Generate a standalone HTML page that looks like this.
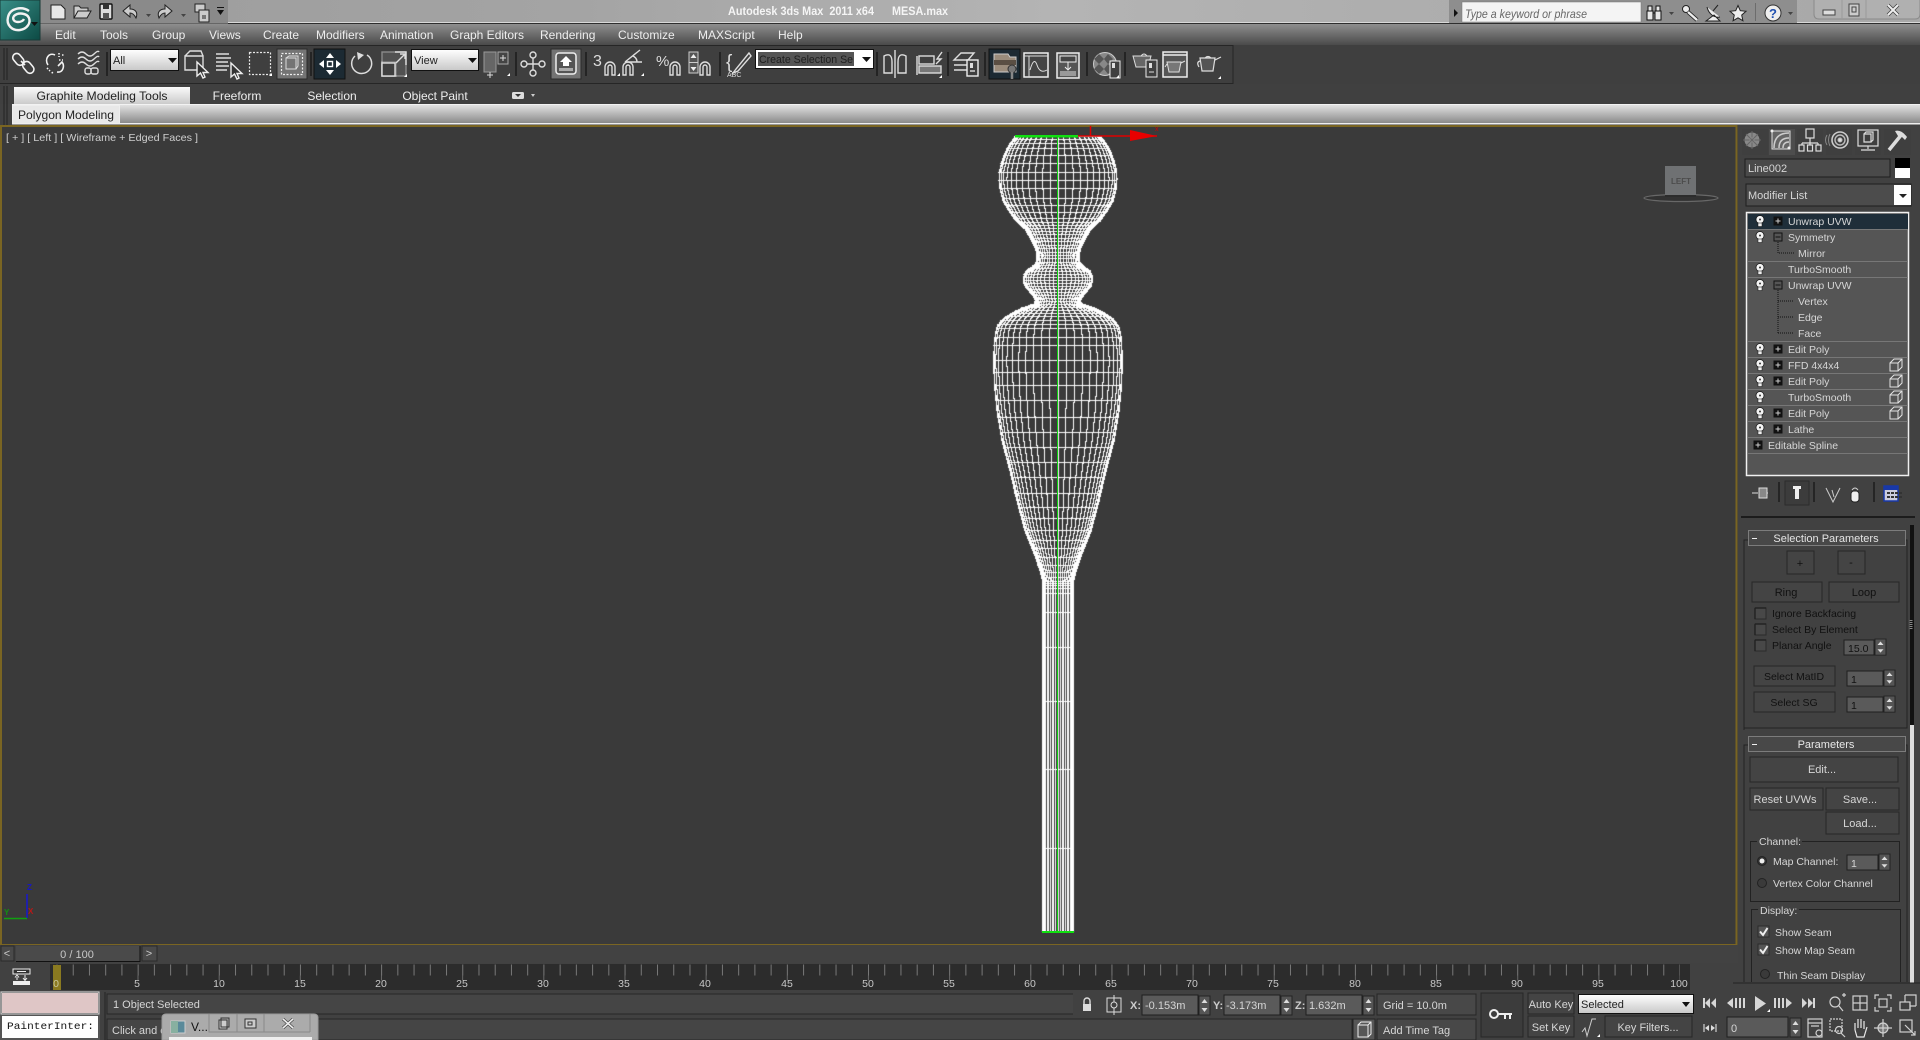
<!DOCTYPE html>
<html><head><meta charset="utf-8"><title>Autodesk 3ds Max 2011 x64 MESA.max</title>
<style>
html,body{margin:0;padding:0;width:1920px;height:1040px;overflow:hidden;background:#3e3e3e}
svg,canvas{position:absolute;left:0;top:0}
text{font-family:"Liberation Sans",sans-serif;font-size:11px;white-space:pre}
.m{font-size:12px;fill:#eee;text-anchor:start}
.t{font-size:12px;fill:#ddd;text-anchor:middle}
.w{font-size:12px;fill:#f4f4f4;font-weight:normal}
.s{fill:#d6d6d6;font-size:10.5px}
.c{fill:#d6d6d6;font-size:10.5px;text-anchor:middle}
.d{fill:#111;font-size:10.5px}
.dc{fill:#111;font-size:10.5px;text-anchor:middle}
.n{fill:#c8c8c8;font-size:10.5px;text-anchor:middle}
.i{fill:none;stroke:#ddd;stroke-width:1.4}
.ib{fill:none;stroke:#f2f2f2;stroke-width:1.6}
.k{fill:none;stroke:#222;stroke-width:1.5}
.b{fill:#444;stroke:#262626;stroke-width:1}
.f{fill:#5a5a5a;stroke:#1e1e1e;stroke-width:1}
</style></head><body>
<svg width="1920" height="1040" viewBox="0 0 1920 1040" xmlns="http://www.w3.org/2000/svg" shape-rendering="auto">
<defs>
<linearGradient id="title" x1="0" x2="1" y1="0" y2="0"><stop offset="0" stop-color="#9c9c9c"/><stop offset=".3" stop-color="#a4a4a4"/><stop offset=".55" stop-color="#b4b4b4"/><stop offset=".72" stop-color="#aeaeae"/><stop offset="1" stop-color="#a8a8a8"/></linearGradient>
<linearGradient id="menu" x1="0" x2="0" y1="0" y2="1"><stop offset="0" stop-color="#8e8e8e"/><stop offset="1" stop-color="#4a4a4a"/></linearGradient>
<linearGradient id="rib" x1="0" x2="0" y1="0" y2="1"><stop offset="0" stop-color="#e2e2e2"/><stop offset="1" stop-color="#8a8a8a"/></linearGradient>
<linearGradient id="tab" x1="0" x2="0" y1="0" y2="1"><stop offset="0" stop-color="#fafafa"/><stop offset="1" stop-color="#c8c8c8"/></linearGradient>
<linearGradient id="dd" x1="0" x2="0" y1="0" y2="1"><stop offset="0" stop-color="#fff"/><stop offset="1" stop-color="#c8c8c8"/></linearGradient>
<linearGradient id="logo" x1="0" x2="1" y1="0" y2="1"><stop offset="0" stop-color="#3a8f88"/><stop offset="1" stop-color="#0c4a44"/></linearGradient>
<g id="bulb"><circle cx="0" cy="-1.5" r="4" fill="#f4f4f4" stroke="#111" stroke-width=".7"/><rect x="-2" y="2" width="4" height="3.5" fill="#eee" stroke="#111" stroke-width=".5"/><circle cx="0" cy="-1.5" r="1" fill="#333"/></g>
<g id="plus"><rect x="-4.5" y="-4.5" width="9" height="9" fill="#111"/><path d="M-2.5 0H2.5M0-2.5V2.5" stroke="#ccc" stroke-width="1"/></g>
<g id="minus"><rect x="-4" y="-4" width="8" height="8" fill="#555" stroke="#111"/><path d="M-2.5 0H2.5" stroke="#111" stroke-width="1"/></g>
<g id="cube"><path d="M-5-2H3V6H-5ZM-5-2L-1-6H7V2L3 6M3-2L7-6" fill="none" stroke="#e4e4e4" stroke-width="1"/></g>
<g id="spin"><rect x="0" y="0" width="11" height="19" fill="#555" stroke="#222"/><path d="M5.5 3L2.5 7H8.5ZM5.5 16L2.5 12H8.5Z" fill="#ddd"/></g>
<g id="chk"><rect x="0" y="0" width="11" height="11" fill="#484848" stroke="#2a2a2a"/><path d="M0 0H11M0 0V11" stroke="#222" stroke-width="1.4"/></g>
<g id="chkon"><rect x="0" y="0" width="11" height="11" fill="#555" stroke="#2a2a2a"/><path d="M2 5.5L5 9L9.5 2" fill="none" stroke="#eee" stroke-width="2"/></g>
<g id="corner"><path d="M0 3L3 0V3Z" fill="#fff"/></g>
</defs>

<!-- base -->
<rect width="1920" height="1040" fill="#414141"/>
<!-- title bar -->
<rect width="1920" height="23" fill="url(#title)"/>
<rect y="22" width="1920" height="1" fill="#d8d8d8"/>
<rect y="23" width="1920" height="1.5" fill="#2e2e2e"/>
<!-- menu -->
<rect y="24" width="1920" height="21" fill="url(#menu)"/>
<rect y="45" width="1920" height="39" fill="#3f3f3f"/>
<!-- QAT -->
<rect x="40" y="0" width="188" height="23" fill="#8a8a8a"/>
<rect x="40" y="23" width="188" height="1" fill="#666"/>
<rect x="0" y="0" width="40" height="40" fill="url(#logo)" stroke="#173a37"/>
<path d="M29 11C22 6 10 8 8 17C6 25 12 31 20 30C27 29 31 23 29 18C27 13 18 12 14 16C12 19 14 22 18 22C21 22 23 21 24 19" fill="none" stroke="#f2f2f2" stroke-width="2.4"/>
<path d="M31 22L38 22L34.5 26Z" fill="#111"/>
<g transform="translate(58,12)"><path d="M-7-7H3L7-3V7H-7Z" fill="#e8e8e8" stroke="#222"/></g>
<g transform="translate(82,12)"><path d="M-8 6V-6H-3L-1-4H6V-1M-8 6L-4-1H9L5 6Z" fill="#ccc" stroke="#222"/></g>
<g transform="translate(106,12)"><rect x="-6" y="-8" width="12" height="15" rx="1" fill="#ddd" stroke="#111" stroke-width="1.4"/><rect x="-3" y="-8" width="6" height="5" fill="#333"/><rect x="-3" y="1" width="6" height="6" fill="#555"/></g>
<g transform="translate(130,12)"><path d="M-7-1L0-7V-3C6-3 8 1 6 6C4 2 2 1 0 1V5Z" fill="#ccc" stroke="#222"/></g>
<path d="M146 14h5l-2.5 3z" fill="#444"/>
<g transform="translate(165,12)"><path d="M7-1L0-7V-3C-6-3-8 1-6 6C-4 2-2 1 0 1V5Z" fill="#ccc" stroke="#222"/></g>
<path d="M181 14h5l-2.5 3z" fill="#444"/>
<g transform="translate(202,13)"><rect x="-7" y="-9" width="10" height="8" fill="#ccc" stroke="#222"/><rect x="-3" y="-3" width="10" height="12" fill="#ccc" stroke="#222"/><path d="M0 3h4M0 5h4" stroke="#222"/></g>
<path d="M217 10h7l-3.5 5z" fill="#111"/><path d="M217 7.5h7" stroke="#111"/>

<text x="728" y="15" class="w" style="font-weight:bold;font-size:11.5px;fill:#f5f5f5" textLength="146" lengthAdjust="spacingAndGlyphs">Autodesk 3ds Max  2011 x64</text>
<text x="892" y="15" class="w" style="font-weight:bold;font-size:11.5px;fill:#f5f5f5" textLength="56" lengthAdjust="spacingAndGlyphs">MESA.max</text>

<!-- search -->
<rect x="1449" y="0" width="348" height="23" fill="#8e8e8e"/>
<path d="M1454 9l4 4-4 4z" fill="#111"/>
<rect x="1462" y="2" width="179" height="20" fill="#f4f4f4" stroke="#777" stroke-width=".5"/>
<text x="1465" y="18" style="font-size:12px;fill:#666;font-style:italic" textLength="122" lengthAdjust="spacingAndGlyphs">Type a keyword or phrase</text>
<g transform="translate(1654,13)" fill="#e8e8e8" stroke="#111"><rect x="-7" y="-2" width="6" height="9"/><rect x="1" y="-2" width="6" height="9"/><rect x="-6" y="-7" width="4" height="5"/><rect x="2" y="-7" width="4" height="5"/><path d="M-1 0h2" /></g>
<path d="M1669 12h5l-2.5 3z" fill="#444"/>
<g transform="translate(1690,13)"><circle cx="-4" cy="-4" r="3.5" fill="#eee" stroke="#222"/><path d="M-2-1L7 7" stroke="#222" stroke-width="4"/><path d="M-2-1L7 7" stroke="#eee" stroke-width="2.4"/></g>
<g transform="translate(1713,13)"><path d="M-6-6C-4 2 2 5 7 4M-7 8H7L1 2Z" fill="#eee" stroke="#222"/><path d="M5-8L0-2" stroke="#222"/></g>
<path d="M1738 5.5l2.3 5.2 5.7.6-4.3 3.8 1.2 5.6-4.9-2.9-4.9 2.9 1.2-5.6-4.3-3.8 5.7-.6z" fill="#eee" stroke="#222"/>
<path d="M1755.500 3v18" stroke="#6c6c6c"/>
<circle cx="1773" cy="13" r="8" fill="#eee" stroke="#333"/>
<text x="1773" y="18" style="font-size:13px;font-weight:bold;fill:#2050b0;text-anchor:middle">?</text>
<path d="M1788 12h5l-2.5 3z" fill="#444"/>
<!-- window buttons -->
<path d="M1814 0V14Q1814 19 1819 19H1915Q1920 19 1920 14V0" fill="#b0b0b0" stroke="#8a8a8a"/>
<path d="M1842 0V19M1866 0V19" stroke="#9a9a9a"/>
<rect x="1823" y="10" width="12" height="5" fill="#ddd" stroke="#444"/>
<rect x="1849" y="4" width="10" height="12" fill="#ccc" stroke="#444"/><rect x="1852" y="7" width="4" height="5" fill="none" stroke="#444"/>
<path d="M1888 5L1898 15M1898 5L1888 15" stroke="#444" stroke-width="3.6"/><path d="M1888 5L1898 15M1898 5L1888 15" stroke="#eee" stroke-width="2"/>

<!-- menu text -->
<g class="m">
<text class="m" x="55" y="39">Edit</text>
<text class="m" x="100" y="39">Tools</text>
<text class="m" x="152" y="39">Group</text>
<text class="m" x="209" y="39">Views</text>
<text class="m" x="263" y="39">Create</text>
<text class="m" x="316" y="39">Modifiers</text>
<text class="m" x="380" y="39">Animation</text>
<text class="m" x="450" y="39">Graph Editors</text>
<text class="m" x="540" y="39">Rendering</text>
<text class="m" x="618" y="39">Customize</text>
<text class="m" x="698" y="39">MAXScript</text>
<text class="m" x="778" y="39">Help</text>
</g>

<!-- main toolbar -->
<path d="M0 45.500H1233V83.500H0" fill="none" stroke="#262626"/>
<path d="M4 48V80M7 48V80" stroke="#222" stroke-width="1"/>
<g class="ib">
<g transform="translate(23,63)"><rect x="-9" y="-10" width="8" height="13" rx="4" transform="rotate(-40 -5 -4)"/><rect x="1" y="-2" width="8" height="13" rx="4" transform="rotate(-40 5 4)"/><path d="M-2-2L2 2"/></g>
<g transform="translate(55,63)"><path d="M-7 2C-11-4-6-11 0-8M2 9C8 10 10 3 7-1L3 3" /><path d="M4-10V-6M7-8H10M4-3H8M-8 5L-5 8M-3 9L-2 11" stroke-dasharray="1.500 1.500"/></g>
<g transform="translate(88,63)" class="i"><path d="M-10-9q4-4 8 0t8 0 5-2M-10-4q4-4 8 0t8 0 5-2M-10 1q4-4 8 0t8 0 5-2"/><rect x="-3" y="5" width="6" height="6" rx="2"/><rect x="3" y="5" width="7" height="6" rx="2"/></g>
</g>
<path d="M107 52V76" stroke="#1c1c1c" stroke-width="1.500"/>
<rect x="110.500" y="49.500" width="68" height="21" fill="url(#dd)" stroke="#111"/>
<text x="113" y="64" style="font-size:11px;fill:#222">All</text>
<path d="M168 58h9l-4.500 5z" fill="#111"/>
<g transform="translate(195,64)" class="i"><path d="M-10-8H8V6H-10ZM-10-8L-5-13H6L8-8"/><path d="M2-2V12L5.500 9L8 14L10 13L8 8.500H13Z" fill="#333" stroke="#eee"/></g>
<g transform="translate(230,64)" class="i"><path d="M-14-10H-1M-14-6H1M-14-2H-2M-14 2H-1M-14 6H-3"/><path d="M1-1V13L4.500 10L7 15L9 14L7 9.500H12Z" fill="#333" stroke="#eee"/></g>
<rect x="249.500" y="52.500" width="21" height="22" fill="none" stroke="#e8e8e8" stroke-dasharray="2 1.500" stroke-width="1.200"/>
<use href="#corner" x="269" y="73"/>
<rect x="277" y="49" width="30" height="30" fill="#747474" stroke="#2b2b2b"/>
<rect x="281.500" y="53.500" width="21" height="21" fill="none" stroke="#eee" stroke-dasharray="2 1.500" stroke-width="1.200"/>
<path d="M286 58H296V69H286ZM286 58L289 56H298V66L296 69" fill="none" stroke="#ddd"/>
<path d="M311 52V76" stroke="#1c1c1c" stroke-width="1.500"/>
<rect x="314" y="49" width="31" height="30" fill="#1c2a33" stroke="#111"/>
<g transform="translate(330,64)" fill="#fff"><path d="M0-11L4-6H-4ZM0 11L4 6H-4ZM-11 0L-6-4V4ZM11 0L6-4V4Z"/><rect x="-2.500" y="-2.500" width="5" height="5" fill="none" stroke="#fff" stroke-width="1.400"/></g>
<g transform="translate(362,64)"><path d="M5-9A10 10 0 1 1-7-8" fill="none" stroke="#ddd" stroke-width="1.500"/><path d="M-5-12L2-9L-4-4Z" fill="#ddd"/></g>
<g transform="translate(394,64)" class="i"><rect x="-12" y="-2" width="14" height="14"/><rect x="-12" y="-12" width="24" height="24" fill="#5a5a5a" stroke="#aaa" opacity=".7"/><rect x="-12" y="-1" width="13" height="13" fill="#3f3f3f" stroke="#ddd"/><path d="M1-12H12V1M2-1L11-10M6-10H11V-5" /></g>
<use href="#corner" x="404" y="74"/>
<rect x="411.500" y="49.500" width="67" height="21" fill="url(#dd)" stroke="#111"/>
<text x="414" y="64" style="font-size:11px;fill:#222">View</text>
<path d="M468 58h9l-4.500 5z" fill="#111"/>
<g transform="translate(497,64)"><rect x="-13" y="-12" width="12" height="20" fill="#666" stroke="#999"/><rect x="1" y="-12" width="10" height="12" fill="#444" stroke="#aaa"/><path d="M-7 8V14M-10 11H-4M6-9V-3M3-6H9" stroke="#ddd"/></g>
<use href="#corner" x="507" y="73"/>
<path d="M516 52V76" stroke="#1c1c1c" stroke-width="1.500"/>
<g transform="translate(533,64)" class="i"><circle cx="0" cy="-9" r="3"/><circle cx="0" cy="9" r="3"/><circle cx="-9" cy="0" r="3"/><circle cx="9" cy="0" r="3"/><path d="M0-6V6M-6 0H6"/></g>
<rect x="551" y="49" width="30" height="30" fill="#737373" stroke="#2b2b2b"/>
<rect x="556" y="53" width="20" height="21" rx="3" fill="#555" stroke="#eee" stroke-width="1.500"/><path d="M566 56L572 62H569V66H563V62H560Z" fill="#fff"/><rect x="559" y="68" width="14" height="3" fill="#aaa"/>
<path d="M586 52V76" stroke="#1c1c1c" stroke-width="1.500"/>
<text x="593" y="66" style="font-size:16px;fill:#ddd">3</text>
<g class="i"><path d="M605 75V67A5 5 0 0 1 615 67V75H612V67A2 2 0 0 0 608 67V75Z"/></g>
<use href="#corner" x="617" y="73"/>
<path d="M625 62L640 50M625 62H642M633 56Q637 58 637 62" class="i" />
<g class="i"><path d="M623 75V67A5 5 0 0 1 633 67V75H630V67A2 2 0 0 0 626 67V75Z"/></g>
<use href="#corner" x="641" y="73"/>
<text x="656" y="66" style="font-size:15px;fill:#ddd">%</text>
<g class="i"><path d="M670 75V67A5 5 0 0 1 680 67V75H677V67A2 2 0 0 0 673 67V75Z"/></g>
<rect x="689" y="52" width="9" height="21" fill="#555" stroke="#ccc"/><path d="M693.500 54l3 4h-6zM693.500 71l3-4h-6z" fill="#eee"/><path d="M689 62.500h9" stroke="#ccc"/>
<g class="i"><path d="M700 75V67A5 5 0 0 1 710 67V75H707V67A2 2 0 0 0 703 67V75Z"/></g>
<path d="M720 52V76" stroke="#1c1c1c" stroke-width="1.500"/>
<text x="726" y="68" style="font-size:19px;fill:#ddd">{</text>
<path d="M749 53L736 69L733 73L738 71L751 56Z" class="i"/>
<text x="727" y="77" style="font-size:7px;fill:#ddd">ABC</text>
<rect x="755.500" y="49.500" width="118" height="19" fill="#fff" stroke="#111"/>
<rect x="758" y="52" width="96" height="14" fill="#555"/>
<text x="759" y="63" style="font-size:11px;fill:#1e1e1e" textLength="94" lengthAdjust="spacingAndGlyphs">Create Selection Se</text>
<path d="M862 57h9l-4.500 5z" fill="#111"/>
<path d="M877 52V76" stroke="#1c1c1c" stroke-width="1.500"/>
<g class="i"><path d="M885 56Q893 52 893 62L893 73H885ZM907 56Q899 52 899 62L899 73H907Z" transform="translate(-1,0)"/><path d="M895 50V78"/></g>
<g class="i"><path d="M917 56V75"/><rect x="919" y="56" width="15" height="8"/><rect x="919" y="66" width="22" height="7" fill="#777"/><path d="M942 52L937 59L941 59L936 64"/></g>
<use href="#corner" x="939" y="75"/>
<path d="M948 52V76" stroke="#1c1c1c" stroke-width="1.500"/>
<g class="i" transform="translate(966,64)"><path d="M-12-4L-5-11H8L2-4ZM-12 1H2M-12 6H2"/><rect x="1" y="-4" width="11" height="16" fill="#3f3f3f" stroke="#eee"/><rect x="4" y="-1" width="3" height="5" fill="#ddd" stroke="none"/><path d="M4 7h5"/></g>
<path d="M985 52V76" stroke="#1c1c1c" stroke-width="1.500"/>
<rect x="989" y="49" width="31" height="30" fill="#1c2a33" stroke="#111"/>
<g transform="translate(1005,64)"><path d="M-11-10H3L5-7H11V8H-11Z" fill="#9a8c7c" stroke="#ccc"/><rect x="-11" y="-4" width="22" height="5" fill="#5a4f44"/><circle cx="7" cy="5" r="4" fill="#777" stroke="#333"/><path d="M7 8V15" stroke="#888" stroke-width="2.500"/></g>
<g transform="translate(1036,64)"><rect x="-12" y="-11" width="24" height="24" fill="#444" stroke="#eee" stroke-width="1.500"/><path d="M-12-8H12M-7-8V13" stroke="#ddd"/><path d="M-6 6Q-2-8 1 1T11 6" fill="none" stroke="#ddd"/></g>
<g transform="translate(1068,64)"><rect x="-11" y="-11" width="22" height="25" fill="#555" stroke="#eee" stroke-width="1.500"/><rect x="-8" y="-8" width="16" height="6" fill="#444" stroke="#eee"/><path d="M0-2V5M-3 3L0 6L3 3" fill="none" stroke="#eee"/><rect x="-8" y="7" width="16" height="5" fill="#999"/></g>
<path d="M1087 52V76" stroke="#1c1c1c" stroke-width="1.500"/>
<g transform="translate(1105,64)"><circle r="11.500" fill="#888" stroke="#ccc"/><path d="M-6-10L-1-5L-6 0L-11-5ZM3-10L8-5L3 0L-1-5ZM-6 0L-1 5L-6 10L-11 5ZM3 0L8 5L3 10L-1 5Z" fill="#555"/><rect x="5" y="-3" width="10" height="17" fill="#3f3f3f" stroke="#eee"/><rect x="7" y="-1" width="3" height="5" fill="#ddd"/></g>
<use href="#corner" x="1116" y="75"/>
<path d="M1125 52V76" stroke="#1c1c1c" stroke-width="1.500"/>
<g transform="translate(1144,62)"><path d="M-11-6H7L4 5H-8Z" fill="#666" stroke="#ddd"/><path d="M-3-6Q0-10 3-6" fill="none" stroke="#ddd"/><rect x="2" y="-2" width="11" height="17" fill="#3f3f3f" stroke="#eee"/><rect x="5" y="1" width="3" height="5" fill="#ddd"/><path d="M5 10h5" stroke="#ddd"/></g>
<g transform="translate(1175,64)"><rect x="-12" y="-12" width="24" height="25" fill="#555" stroke="#eee" stroke-width="1.500"/><path d="M-12-9H12" stroke="#eee" stroke-width="1.500"/><path d="M-8-2H6L4 8H-6ZM6-1L10-3M-8 0L-10 3" fill="#777" stroke="#ddd"/></g>
<g transform="translate(1208,64)"><path d="M-8-6H7L5 7H-6ZM-3-6Q0-9 3-6M7-4L13-7M-8-3Q-12-2-9 3" fill="#555" stroke="#ddd" stroke-width="1.200"/></g>
<use href="#corner" x="1218" y="76"/>

<!-- ribbon tabs -->
<rect y="84" width="1920" height="20" fill="#404040"/>
<path d="M4 86V125M7 86V125" stroke="#222"/>
<rect x="14" y="87" width="176" height="18" fill="url(#tab)"/>
<text x="102" y="100" style="font-size:12px;fill:#222;text-anchor:middle" textLength="131" lengthAdjust="spacingAndGlyphs">Graphite Modeling Tools</text>
<text class="t" x="237" y="100" style="fill:#eee">Freeform</text>
<text class="t" x="332" y="100" style="fill:#eee">Selection</text>
<text class="t" x="435" y="100" style="fill:#eee">Object Paint</text>
<rect x="512" y="92" width="12" height="7" rx="1.500" fill="#ddd"/><path d="M515 94h6l-3 3z" fill="#333"/>
<path d="M531 94h4l-2 3z" fill="#ccc"/>
<!-- ribbon panel -->
<rect x="12" y="104" width="1908" height="1" fill="#f2f2f2"/>
<rect x="12" y="105" width="1908" height="18" fill="url(#rib)"/>
<rect x="12" y="123" width="1908" height="1.500" fill="#eee"/>
<rect x="12.500" y="105.500" width="107" height="18" fill="#e8e8e8" stroke="#eee"/>
<text x="66" y="119" style="font-size:12px;fill:#222;text-anchor:middle" textLength="96" lengthAdjust="spacingAndGlyphs">Polygon Modeling</text>

<!-- right col bg -->
<rect x="1738" y="125" width="182" height="915" fill="#414141"/>
<!-- viewport -->
<rect x="0" y="125" width="1738" height="820" fill="#3a3a3a"/>
<path d="M1 947V126H1736.500V945H0" fill="none" stroke="#7a6522" stroke-width="2"/>
</svg>

<canvas id="wf" width="1920" height="1040"></canvas>

<svg width="1920" height="1040" viewBox="0 0 1920 1040" xmlns="http://www.w3.org/2000/svg">
<text x="6" y="141" style="font-size:10.500px;fill:#cfcfcf" textLength="192" lengthAdjust="spacingAndGlyphs">[ + ] [ Left ] [ Wireframe + Edged Faces ]</text>
<!-- gizmo -->
<rect x="1015" y="135" width="63" height="2.500" fill="#10e010"/>
<path d="M1078 136H1157" stroke="#e00000" stroke-width="1.500"/>
<path d="M1090.500 126V136" stroke="#e00000" stroke-width="1.500"/>
<path d="M1130 130L1157 136L1130 141Z" fill="#e80000"/>
<text x="1155" y="131" style="font-size:7px;fill:#d00000">x</text>
<rect x="1057" y="136" width="1" height="795" fill="#10d010"/>
<rect x="1042" y="931" width="32" height="2" fill="#10e010"/>
<!-- axis tripod -->
<path d="M27 894V918" stroke="#1818d0" stroke-width="1.500"/>
<path d="M4 918.500H27" stroke="#10a010" stroke-width="1.500"/>
<text x="27" y="890" style="font-size:8px;font-weight:bold;fill:#1818c0">Z</text>
<text x="28" y="914" style="font-size:8px;font-weight:bold;fill:#b81818">X</text>
<text x="4" y="915" style="font-size:8px;font-weight:bold;fill:#109010">Y</text>
<!-- viewcube -->
<ellipse cx="1681" cy="198" rx="37" ry="3.500" fill="#323232" stroke="#686868" stroke-width="1.200"/>
<rect x="1665" y="166" width="31" height="29" fill="#6f7173"/>
<rect x="1665" y="195" width="31" height="2" fill="#2c2c2c"/>
<text x="1681" y="184" style="font-size:8px;font-weight:bold;fill:#4c4c4c;text-anchor:middle">LEFT</text>

<!-- command panel tabs -->
<g>
<rect x="1742" y="129" width="26" height="26" fill="#3f3f3f"/>
<rect x="1769" y="129" width="26" height="26" fill="#4d4d4d"/>
<rect x="1797" y="129" width="26" height="26" fill="#3f3f3f"/>
<rect x="1826" y="129" width="26" height="26" fill="#3f3f3f"/>
<rect x="1855" y="129" width="26" height="26" fill="#3f3f3f"/>
<rect x="1884" y="129" width="27" height="26" fill="#3f3f3f"/>
<g transform="translate(1752,140)"><circle r="7.500" fill="#888"/><circle r="2.500" fill="#bbb"/><path d="M0-9V9M-9 0H9M-6-6L6 6M6-6L-6 6" stroke="#666"/></g>
<g transform="translate(1781,140)"><rect x="-9" y="-9" width="18" height="18" fill="#666" stroke="#ddd"/><path d="M-7 8Q-7-7 8-7M-2 8Q-2-2 8-2M2 8Q2 2 8 2" fill="none" stroke="#ccc" stroke-width="1.500"/><circle cx="8" cy="8" r="1.500" fill="#eee"/><circle cx="-9" cy="-9" r="1.500" fill="#eee"/></g>
<g transform="translate(1810,140)" fill="none" stroke="#ddd" stroke-width="1.200"><rect x="-4" y="-11" width="8" height="9"/><path d="M0-2V3M-8 3H8M-8 3V5M0 3V5M8 3V5"/><rect x="-11" y="5" width="5" height="6"/><rect x="-2.500" y="5" width="5" height="6"/><rect x="6" y="5" width="5" height="6"/></g>
<g transform="translate(1840,140)" fill="none" stroke="#bbb"><circle r="2" fill="#ddd"/><circle r="5" stroke-width="1.400"/><circle r="8" stroke-width="1.600" stroke="#ccc"/><path d="M-10-6Q-13 0-10 6M-13-5Q-16 0-13 5" stroke="#888"/></g>
<g transform="translate(1868,140)" fill="none" stroke="#ddd" stroke-width="1.200"><rect x="-10" y="-10" width="20" height="16"/><path d="M-4-6H3V2H-4ZM-4-6L-2-8H5V0L3 2M0 6V9M-7 10H7"/></g>
<g transform="translate(1898,140)"><path d="M-9 10L4-6" stroke="#ddd" stroke-width="3.500"/><path d="M-3-9Q3-11 9-3L7 0L3-4L0-4Z" fill="#ddd"/></g>
</g>

<!-- name -->
<rect x="1745" y="159" width="145" height="18" fill="#4a4a4a" stroke="#1e1e1e"/>
<text x="1748" y="172" class="s" style="font-size:11px">Line002</text>
<rect x="1895" y="158" width="15" height="10" fill="#000"/>
<rect x="1895" y="168" width="15" height="10" fill="#fff"/>
<!-- modifier list -->
<rect x="1746" y="184" width="165" height="22" fill="#4c4c4c" stroke="#1e1e1e"/>
<text x="1748" y="199" class="s" style="font-size:11px">Modifier List</text>
<rect x="1894" y="185" width="17" height="20" fill="#fff"/>
<path d="M1899 194h8l-4 4z" fill="#222"/>
<!-- stack -->
<rect x="1746.500" y="212.500" width="162" height="263" fill="#555" stroke="#f0f0f0" stroke-width="1.500"/>
<rect x="1748" y="214" width="160" height="15" fill="#1f2e39"/>
<g stroke="#777" stroke-width="1">
<path d="M1748 229.500H1908M1748 261.500H1908M1748 277.500H1908M1748 341.500H1908M1748 357.500H1908M1748 373.500H1908M1748 389.500H1908M1748 405.500H1908M1748 421.500H1908M1748 437.500H1908M1748 453.500H1908"/>
</g>
<use href="#bulb" x="1760" y="221"/><use href="#plus" x="1778" y="221"/>
<use href="#bulb" x="1760" y="237"/><use href="#minus" x="1778" y="237"/>
<use href="#bulb" x="1760" y="269"/>
<use href="#bulb" x="1760" y="285"/><use href="#minus" x="1778" y="285"/>
<use href="#bulb" x="1760" y="349"/><use href="#plus" x="1778" y="349"/>
<use href="#bulb" x="1760" y="365"/><use href="#plus" x="1778" y="365"/>
<use href="#bulb" x="1760" y="381"/><use href="#plus" x="1778" y="381"/>
<use href="#bulb" x="1760" y="397"/>
<use href="#bulb" x="1760" y="413"/><use href="#plus" x="1778" y="413"/>
<use href="#bulb" x="1760" y="429"/><use href="#plus" x="1778" y="429"/>
<use href="#plus" x="1758" y="445"/>
<use href="#cube" x="1895" y="365"/><use href="#cube" x="1895" y="381"/><use href="#cube" x="1895" y="397"/><use href="#cube" x="1895" y="413"/>
<path d="M1778 242V253H1794M1778 290V333M1778 301H1794M1778 317H1794M1778 333H1794" fill="none" stroke="#111" stroke-dasharray="1 1"/>
<text class="s" x="1788" y="225">Unwrap UVW</text>
<text class="s" x="1788" y="241">Symmetry</text>
<text class="s" x="1798" y="257">Mirror</text>
<text class="s" x="1788" y="273">TurboSmooth</text>
<text class="s" x="1788" y="289">Unwrap UVW</text>
<text class="s" x="1798" y="305">Vertex</text>
<text class="s" x="1798" y="321">Edge</text>
<text class="s" x="1798" y="337">Face</text>
<text class="s" x="1788" y="353">Edit Poly</text>
<text class="s" x="1788" y="369">FFD 4x4x4</text>
<text class="s" x="1788" y="385">Edit Poly</text>
<text class="s" x="1788" y="401">TurboSmooth</text>
<text class="s" x="1788" y="417">Edit Poly</text>
<text class="s" x="1788" y="433">Lathe</text>
<text class="s" x="1768" y="449">Editable Spline</text>
<!-- stack buttons -->
<path d="M1752 493H1758M1767 493H1768" stroke="#ddd"/><rect x="1759" y="488" width="8" height="10" fill="#888" stroke="#ddd"/>
<path d="M1779 482V502M1814 482V502M1874 482V502" stroke="#1c1c1c" stroke-width="1.500"/>
<rect x="1785" y="481" width="24" height="24" fill="#3c3c3c" stroke="#2c2c2c"/>
<path d="M1793 486H1801V489H1799V499H1795V489H1793Z" fill="#eee"/>
<path d="M1826 488L1833 502L1840 488M1832 490L1834 497" fill="none" stroke="#ccc"/>
<rect x="1851" y="491" width="8" height="11" rx="3" fill="#eee" stroke="#222"/><path d="M1852 490Q1855 486 1858 490" fill="none" stroke="#ccc"/>
<rect x="1884" y="486" width="14" height="15" fill="#ccd" stroke="#1838a8" stroke-width="1.500"/><rect x="1884" y="486" width="14" height="4" fill="#1838a8"/><path d="M1887 493H1903M1887 497H1903" stroke="#333" stroke-dasharray="3 1" stroke-width="2"/>
<path d="M1741 517H1915" stroke="#111" stroke-width="1.500"/>

<!-- scrollbar -->
<rect x="1910" y="525" width="4" height="200" fill="#111"/>
<rect x="1910" y="725" width="4" height="258" fill="#dcdcdc"/>
<path d="M1911 620V630" stroke="#888" stroke-width="3" stroke-dasharray="1 1"/>

<!-- selection params -->
<path d="M1744 730V540H1748M1905 540H1907V728H1744" fill="none" stroke="#222"/>
<rect x="1748.500" y="530.500" width="157" height="15" fill="#484848" stroke="#7c7c7c"/>
<path d="M1752 538.500H1757" stroke="#eee"/>
<text class="c" x="1826" y="542" style="font-size:11px;fill:#e4e4e4">Selection Parameters</text>
<rect class="b" x="1787" y="551" width="27" height="23"/><text class="dc" x="1800" y="567" style="font-size:11px">+</text>
<rect class="b" x="1838" y="551" width="27" height="23"/><text class="dc" x="1851" y="566" style="font-size:11px">-</text>
<rect class="b" x="1752" y="582" width="70" height="20"/><text class="dc" x="1786" y="596" style="font-size:11px">Ring</text>
<rect class="b" x="1829" y="582" width="70" height="20"/><text class="dc" x="1864" y="596" style="font-size:11px">Loop</text>
<use href="#chk" x="1755" y="608"/><text class="d" x="1772" y="617">Ignore Backfacing</text>
<use href="#chk" x="1755" y="624"/><text class="d" x="1772" y="633">Select By Element</text>
<use href="#chk" x="1755" y="640"/><text class="d" x="1772" y="649">Planar Angle</text>
<rect class="f" x="1844" y="640" width="30" height="15"/><text class="d" x="1848" y="652" style="font-size:10.500px">15.0</text>
<use href="#spin" transform="translate(1875,639) scale(1,.85)"/>
<rect class="b" x="1754" y="666" width="81" height="20"/><text class="dc" x="1794" y="680" style="font-size:10.500px">Select MatID</text>
<rect class="f" x="1847" y="671" width="36" height="15"/><text class="d" x="1851" y="683">1</text>
<use href="#spin" transform="translate(1884,670) scale(1,.85)"/>
<rect class="b" x="1754" y="692" width="81" height="20"/><text class="dc" x="1794" y="706" style="font-size:10.500px">Select SG</text>
<rect class="f" x="1847" y="697" width="36" height="15"/><text class="d" x="1851" y="709">1</text>
<use href="#spin" transform="translate(1884,696) scale(1,.85)"/>

<!-- Parameters -->
<path d="M1744 982V745H1748M1905 745H1907V982" fill="none" stroke="#222"/>
<rect x="1748.500" y="736.500" width="157" height="15" fill="#484848" stroke="#7c7c7c"/>
<path d="M1752 744.500H1757" stroke="#eee"/>
<text class="c" x="1826" y="748" style="font-size:11px;fill:#e8e8e8">Parameters</text>
<rect class="b" x="1750" y="757" width="148" height="25"/><text class="c" x="1822" y="773" style="font-size:11px">Edit...</text>
<rect class="b" x="1750" y="788" width="73" height="22"/><text class="c" x="1785" y="803" style="font-size:11px">Reset UVWs</text>
<rect class="b" x="1826" y="788" width="73" height="22"/><text class="c" x="1860" y="803" style="font-size:11px">Save...</text>
<rect class="b" x="1826" y="812" width="73" height="22"/><text class="c" x="1860" y="827" style="font-size:11px">Load...</text>
<path d="M1757 841.500H1750.500V901.500H1899.500V841.500H1802" fill="none" stroke="#222"/>
<text class="s" x="1759" y="845">Channel:</text>
<circle cx="1762" cy="861" r="4.500" fill="#333" stroke="#222"/><circle cx="1762" cy="861" r="2.500" fill="#eee"/>
<text class="s" x="1773" y="865">Map Channel:</text>
<rect class="f" x="1847" y="855" width="31" height="15"/><text class="s" x="1851" y="867">1</text>
<use href="#spin" transform="translate(1879,854) scale(1,.85)"/>
<circle cx="1762" cy="883" r="4.500" fill="#3a3a3a" stroke="#222"/>
<text class="s" x="1773" y="887">Vertex Color Channel</text>
<path d="M1758 909.500H1751.500V982M1900.500 982V909.500H1799" fill="none" stroke="#222"/>
<text class="s" x="1760" y="914">Display:</text>
<use href="#chkon" x="1758" y="926"/><text class="s" x="1775" y="936">Show Seam</text>
<use href="#chkon" x="1758" y="944"/><text class="s" x="1775" y="954">Show Map Seam</text>
<circle cx="1765" cy="974" r="4.500" fill="#3a3a3a" stroke="#222"/>
<text class="s" x="1777" y="979">Thin Seam Display</text>
<path d="M1733 983H1920" stroke="#222"/>

<!-- time slider -->
<rect x="0" y="945" width="1738" height="18" fill="#424242"/>
<rect x="1" y="946" width="13" height="15" fill="#4a4a4a" stroke="#2a2a2a"/>
<text class="n" x="7" y="957" style="font-size:11px">&lt;</text>
<rect x="16" y="946" width="124" height="15" fill="#4a4a4a"/>
<path d="M16 961.500H140V946" fill="none" stroke="#111"/>
<text class="n" x="77" y="958" style="font-size:11px">0 / 100</text>
<rect x="142" y="946" width="15" height="15" fill="#4a4a4a" stroke="#2a2a2a"/>
<text class="n" x="149" y="957" style="font-size:11px">&gt;</text>
<!-- track bar -->
<rect x="50" y="964" width="1640" height="26" fill="#2c2c2c"/>
<line x1="56.500" y1="970" x2="1680" y2="970" stroke="#787878" stroke-width="11" stroke-dasharray="1 15.230"/>
<line x1="137.500" y1="978" x2="1680" y2="978" stroke="#787878" stroke-width="5" stroke-dasharray="1 80.160" opacity=".8"/>
<rect x="53" y="965" width="8" height="25" fill="#8a7a20"/>
<g class="n">
<text class="n" x="56" y="987" style="fill:#c8c8a0">0</text>
<text class="n" x="137" y="987">5</text><text class="n" x="219" y="987">10</text><text class="n" x="300" y="987">15</text><text class="n" x="381" y="987">20</text><text class="n" x="462" y="987">25</text><text class="n" x="543" y="987">30</text><text class="n" x="624" y="987">35</text><text class="n" x="705" y="987">40</text><text class="n" x="787" y="987">45</text><text class="n" x="868" y="987">50</text><text class="n" x="949" y="987">55</text><text class="n" x="1030" y="987">60</text><text class="n" x="1111" y="987">65</text><text class="n" x="1192" y="987">70</text><text class="n" x="1273" y="987">75</text><text class="n" x="1355" y="987">80</text><text class="n" x="1436" y="987">85</text><text class="n" x="1517" y="987">90</text><text class="n" x="1598" y="987">95</text><text class="n" x="1679" y="987">100</text>
</g>
<!-- track icon -->
<g transform="translate(21,977)"><rect x="-8" y="-8" width="17" height="5" fill="#333" stroke="#eee"/><path d="M-4-5.500H5" stroke="#eee"/><path d="M-4 0V3M-6 0.500L-4-2L-2 .5M4-2V3M2 1L4 3.500L6 1" stroke="#eee" fill="none"/><rect x="-8" y="4" width="17" height="4" fill="#eee"/></g>

<!-- bottom area left -->
<rect x="0" y="991" width="100" height="49" fill="#555"/>
<rect x="2" y="993" width="96" height="20" fill="#dfc6c6"/>
<rect x="1" y="992" width="98" height="22" fill="none" stroke="#d8d8d8"/>
<rect x="2" y="1016" width="96" height="22" fill="#fff"/>
<text x="7" y="1029" style="font-family:'Liberation Mono',monospace;font-size:10.500px;fill:#111" textLength="87" lengthAdjust="spacingAndGlyphs">PainterInter:</text>
<path d="M105 992V1040" stroke="#222"/>
<rect x="107" y="994" width="967" height="20" fill="#454545" stroke="#262626"/>
<text x="113" y="1008" class="s" style="font-size:11px">1 Object Selected</text>
<rect x="107" y="1019" width="1245" height="21" fill="#454545" stroke="#262626"/>
<text x="112" y="1034" class="s" style="font-size:11px">Click and d</text>
<!-- float window -->
<path d="M162 1040V1018Q162 1014 166 1014H314Q318 1014 318 1018V1040Z" fill="#ababab" stroke="#999"/>
<rect x="169" y="1037" width="143" height="3" fill="#efefef"/>
<rect x="171" y="1021" width="14" height="12" fill="#5a8a9a" stroke="#ccc"/><rect x="171" y="1021" width="7" height="12" fill="#88b0a0"/>
<text x="191" y="1031" style="font-size:12px;fill:#111">V...</text>
<path d="M209 1014V1032H310" fill="none" stroke="#8a8a8a"/>
<path d="M237 1014V1032M264 1014V1032M310 1014V1032" stroke="#8a8a8a"/>
<rect x="219" y="1020" width="8" height="9" fill="#ccc" stroke="#333"/><rect x="221" y="1018" width="8" height="9" fill="none" stroke="#333"/>
<rect x="245" y="1019" width="11" height="9" fill="#ccc" stroke="#333"/><rect x="248" y="1022" width="4" height="3" fill="none" stroke="#333"/>
<path d="M283 1019L293 1028M293 1019L283 1028" stroke="#444" stroke-width="3"/><path d="M283 1019L293 1028M293 1019L283 1028" stroke="#eee" stroke-width="1.600"/>

<!-- coordinates -->
<rect x="1073" y="992" width="300" height="26" fill="#414141"/>
<g transform="translate(1087,1005)"><rect x="-4" y="-1" width="8" height="7" fill="#ddd"/><path d="M-3-1V-4A3 3 0 0 1 3-4V-1" fill="none" stroke="#ddd" stroke-width="1.400"/></g>
<g transform="translate(1114,1005)" fill="none" stroke="#ddd"><rect x="-7" y="-7" width="14" height="14"/><circle r="3"/><path d="M0-10V-3M0 3V10"/></g>
<text class="s" x="1130" y="1009" style="font-size:11px;font-weight:bold;fill:#ccc">X:</text>
<rect class="f" x="1142" y="995" width="56" height="20"/><text class="s" x="1145" y="1009" style="font-size:11px">-0.153m</text>
<use href="#spin" x="1199" y="996"/>
<text class="s" x="1213" y="1009" style="font-size:11px;font-weight:bold;fill:#ccc">Y:</text>
<rect class="f" x="1224" y="995" width="56" height="20"/><text class="s" x="1226" y="1009" style="font-size:11px">-3.173m</text>
<use href="#spin" x="1281" y="996"/>
<text class="s" x="1295" y="1009" style="font-size:11px;font-weight:bold;fill:#ccc">Z:</text>
<rect class="f" x="1306" y="995" width="56" height="20"/><text class="s" x="1309" y="1009" style="font-size:11px">1.632m</text>
<use href="#spin" x="1363" y="996"/>
<rect x="1377" y="994" width="99" height="21" fill="#484848" stroke="#262626"/>
<text class="s" x="1383" y="1009" style="font-size:11px">Grid = 10.0m</text>
<rect x="1353" y="1019" width="22" height="21" fill="#565656" stroke="#222"/>
<path d="M1358 1025H1368V1037H1358ZM1358 1025L1361 1022H1371V1034L1368 1037M1368 1025L1371 1022" fill="none" stroke="#eee"/>
<rect x="1377" y="1019" width="99" height="21" fill="#484848" stroke="#262626"/>
<text class="s" x="1383" y="1034" style="font-size:11px">Add Time Tag</text>
<!-- key -->
<rect x="1481" y="993" width="42" height="44" fill="#3c3c3c" stroke="#262626"/>
<circle cx="1494" cy="1014" r="4" fill="none" stroke="#eee" stroke-width="2"/><path d="M1498 1014H1512M1505 1014V1019M1510 1014V1019" stroke="#eee" stroke-width="2"/>
<rect class="b" x="1528" y="993" width="46" height="21"/><text class="c" x="1551" y="1008" style="font-size:11px">Auto Key</text>
<rect class="b" x="1528" y="1016" width="46" height="21"/><text class="c" x="1551" y="1031" style="font-size:11px">Set Key</text>
<rect x="1578.500" y="994.500" width="115" height="19" fill="url(#dd)" stroke="#111"/>
<text x="1581" y="1008" style="font-size:11px;fill:#222">Selected</text>
<path d="M1682 1002h8l-4 5z" fill="#111"/>
<path d="M1582 1032L1585 1028L1587 1036L1592 1019H1596" fill="none" stroke="#ccc"/>
<use href="#corner" x="1597" y="1034"/>
<rect class="b" x="1605" y="1016" width="87" height="21"/><text class="c" x="1648" y="1031" style="font-size:11px">Key Filters...</text>
<!-- playback -->
<g fill="#d6d6d6" stroke="none">
<path d="M1703 998h2v10h-2zM1710 998v10l-5-5zM1716 998v10l-5-5z"/>
<path d="M1733 998v10l-6-5zM1735 998h2v10h-2zM1739 998h2v10h-2zM1743 998h2v10h-2z"/>
<path d="M1755 996L1766 1003.500L1755 1011Z"/>
<use href="#corner" x="1767" y="1009"/>
<path d="M1775 998h2v10h-2zM1779 998h2v10h-2zM1783 998h2v10h-2zM1787 998v10l6-5z" transform="translate(-1,0)"/>
<path d="M1802 998v10l5-5zM1808 998v10l5-5zM1813 998h2v10h-2z"/>
</g>
<g fill="none" stroke="#d0d0d0" stroke-width="1.200">
<g transform="translate(1837,1003)"><circle cx="-2" cy="-1" r="5"/><path d="M2 3L6 8M5-8H9M7-10V-6"/></g>
<g transform="translate(1860,1003)"><rect x="-7" y="-7" width="14" height="14"/><path d="M0-7V7M-7 0H7"/></g>
<g transform="translate(1883,1003)"><rect x="-4" y="-4" width="8" height="8" /><path d="M-8-4V-8H-4M4-8H8V-4M8 4V8H4M-4 8H-8V4"/></g>
<g transform="translate(1908,1003)"><rect x="-8" y="-1" width="10" height="8"/><path d="M-3-8H8V3M-3-1V-8M2-1V7M2 3H8"/></g>
<path d="M1704 1024V1032M1716 1024V1032"/>
</g>
<path d="M1709 1025V1031L1705 1028ZM1711 1025V1031L1715 1028Z" fill="#ddd"/>
<rect class="f" x="1727" y="1017" width="61" height="20"/>
<text class="s" x="1731" y="1032" style="font-size:11px">0</text>
<use href="#spin" x="1790" y="1018"/>
<g fill="none" stroke="#d0d0d0" stroke-width="1.200">
<g transform="translate(1815,1028)"><rect x="-7" y="-9" width="14" height="18"/><path d="M-7-5H7M-4-2H4"/><circle cx="4" cy="5" r="3"/></g>
<g transform="translate(1838,1028)"><rect x="-8" y="-9" width="12" height="12" stroke-dasharray="2 1"/><circle cx="1" cy="2" r="3.500"/><path d="M3 5L7 9"/></g>
<g transform="translate(1860,1028)"><path d="M-5 2V-5M-2 0V-9M1 0V-9M4 1V-7M-5 2L-3 9H4L7-1" stroke="#e8e8e8"/></g>
<g transform="translate(1883,1028)"><circle r="5" fill="#777"/><path d="M0-9V9M-9 0H9"/></g>
<g transform="translate(1908,1028)"><rect x="-8" y="-8" width="12" height="12"/><path d="M-3-3L7 7M3 7H7V3"/></g>
</g>
</svg>

<script>
(function(){
var c=document.getElementById('wf').getContext('2d');
c.fillStyle='#fff';
var cx=1057;
var P=[[136,43],[140,46],[145,49.5],[152,53],[160,56],[170,58.5],[178,59],[188,58],[200,55],[210,49],[220,42],[228,33],[240,26],[248,22.5],[254,21],[262,22],[266,26],[270,32],[275,34],[280,34.500],[285,33],[290,29],[295,25],[300,22],[303,24],[307,36],[312,46],[318,55],[325,60.5],[332,62.5],[340,63.5],[360,64.500],[385,63.5],[410,61],[440,56],[470,48],[500,41],[530,33],[555,23],[570,18],[580,15.500],[931,15.500]];
function r(y){for(var i=1;i<P.length;i++){if(y<=P[i][0]){var a=P[i-1],b=P[i];return a[1]+(b[1]-a[1])*(y-a[0])/(b[0]-a[0]);}}return 15.500;}
var rings=[136,139,143,148,155,163,172,180,188,198,205,212,218,222,225,228,231,234,238,241,245,248,252,255,258,262,265,268,271,274,277,280,283,286,289,292,295,298,301,304,307,310,313,316,320,324,328,337,345,360,372,385,400,417,432,447,462,477,493,507,518,530,540,548,557,565,572,577,581,583,585,588,593,612,647,701,769,848];
rings.forEach(function(y){var R=r(y);var a=Math.round(cx-R),b=Math.round(cx+R);c.fillRect(a,y,b-a+1,1);});
for(var k=-12;k<=12;k++){
 var s=Math.sin(k*7.5*Math.PI/180),prev=null;
 for(var y=136;y<=931;y++){
  var x=Math.round(cx+0.5+r(y)*s);
  if(prev===null)prev=x;
  var a=Math.min(prev,x),b=Math.max(prev,x);
  c.fillRect(a,y,b-a+1,1);
  prev=x;
 }
}
})();
</script>
</body></html>
